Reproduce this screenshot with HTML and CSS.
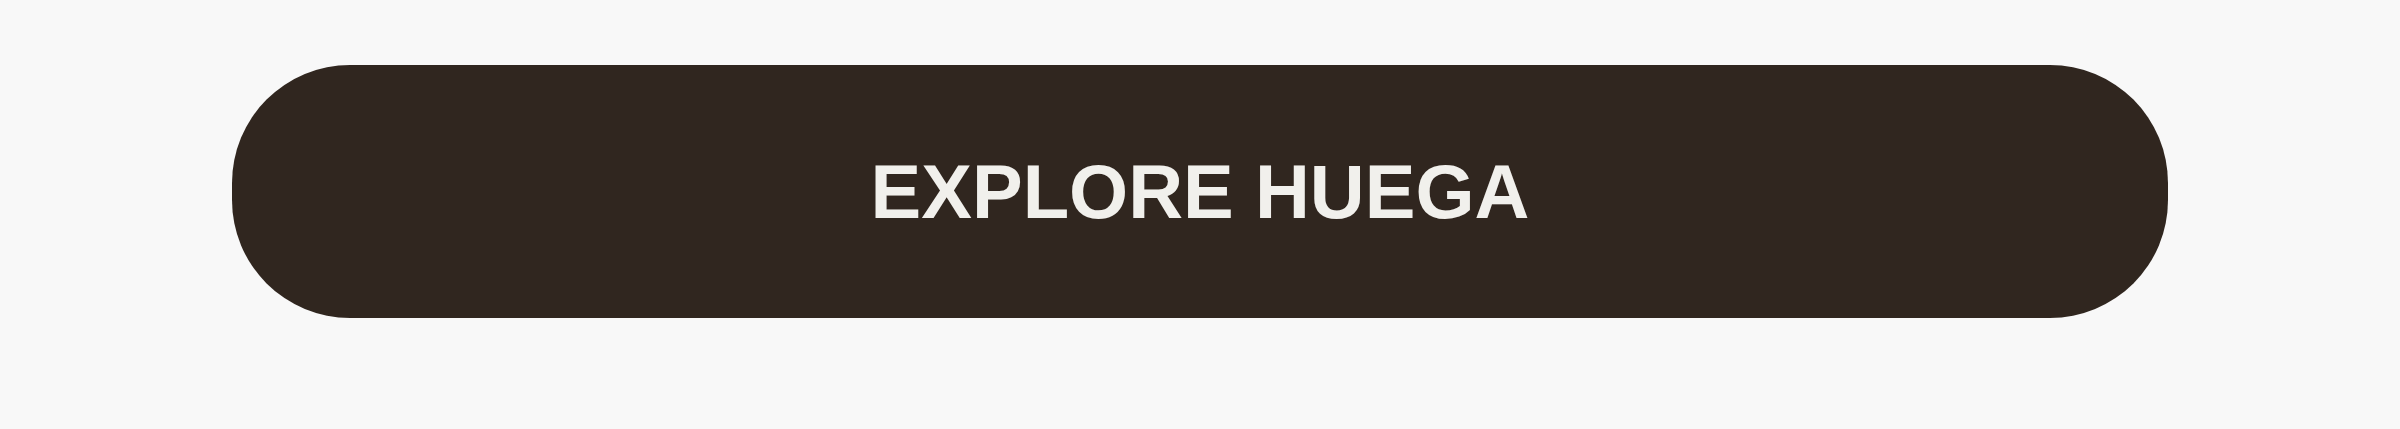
FILE: index.html
```html
<!DOCTYPE html>
<html lang="en">
<head>
<meta charset="utf-8">
<title>Explore Huega</title>
<link rel="stylesheet" href="styles.css">
</head>
<body>
<main class="page">
  <a class="cta" href="#">Explore Huega</a>
</main>
</body>
</html>
```
FILE: styles.css
```css
html, body {
  margin: 0;
  padding: 0;
  background: #f8f8f8;
}
.page {
  padding: 65px 232px 0;
}
.cta {
  display: flex;
  align-items: center;
  justify-content: center;
  height: 253px;
  border-radius: 118px;
  background: #30261f;
  color: #f1f0ec;
  font-family: "Liberation Sans", Arial, Helvetica, sans-serif;
  font-weight: 700;
  font-size: 76px;
  line-height: 1;
  text-transform: uppercase;
  text-decoration: none;
}
```
